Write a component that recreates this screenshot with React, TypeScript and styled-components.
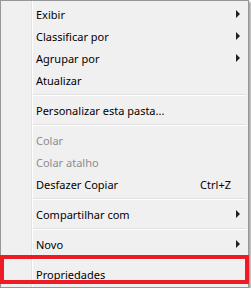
import React from 'react'
import styled, { createGlobalStyle } from 'styled-components'

const GlobalStyle = createGlobalStyle`
  html, body {
    margin: 0;
    padding: 0;
    background: #ffffff;
  }
`

const Menu = styled.div`
  position: relative;
  width: 249px;
  box-sizing: border-box;
  border: 1px solid #979797;
  background-color: #f0f0f0;
  background-image: linear-gradient(
    to right,
    transparent 30px,
    #e2e3e3 30px,
    #e2e3e3 31px,
    #ffffff 31px,
    #ffffff 32px,
    transparent 32px
  );
  padding: 2px;
  box-shadow: 2px 2px 2px rgba(0, 0, 0, 0.35);
  font-family: 'Noto Sans', 'Open Sans', sans-serif;
  font-size: 11px;
  display: flex;
  flex-direction: column;
`

const Item = styled.div<{ $disabled?: boolean }>`
  display: grid;
  grid-template-columns: 1fr auto 10px;
  align-items: center;
  height: 22px;
  padding-left: 33px;
  color: ${(p) => (p.$disabled ? '#8d8d8d' : '#000000')};
  white-space: nowrap;
`

const Label = styled.span``

const Shortcut = styled.span`
  padding-right: 5px;
`

const Arrow = styled.span`
  justify-self: start;
  width: 0;
  height: 0;
  border-top: 4px solid transparent;
  border-bottom: 4px solid transparent;
  border-left: 4px solid #202020;
`

const Separator = styled.div`
  height: 8px;
  margin-left: 30px;
  display: flex;
  flex-direction: column;
  justify-content: center;
  &::before {
    content: '';
    display: block;
    border-top: 1px solid #e0e0e0;
    border-bottom: 1px solid #ffffff;
  }
`

const Highlight = styled.div`
  position: absolute;
  left: -1px;
  right: -1px;
  bottom: 3px;
  height: 29px;
  box-sizing: border-box;
  border: 4px solid #ed1c24;
  pointer-events: none;
`

type Entry =
  | { sep: true }
  | { label: string; submenu?: boolean; shortcut?: string; disabled?: boolean }

const entries: Entry[] = [
  { label: 'Exibir', submenu: true },
  { label: 'Classificar por', submenu: true },
  { label: 'Agrupar por', submenu: true },
  { label: 'Atualizar' },
  { sep: true },
  { label: 'Personalizar esta pasta...' },
  { sep: true },
  { label: 'Colar', disabled: true },
  { label: 'Colar atalho', disabled: true },
  { label: 'Desfazer Copiar', shortcut: 'Ctrl+Z' },
  { sep: true },
  { label: 'Compartilhar com', submenu: true },
  { sep: true },
  { label: 'Novo', submenu: true },
  { sep: true },
  { label: 'Propriedades' },
]

export default function App() {
  return (
    <>
      <GlobalStyle />
      <Menu>
        {entries.map((e, i) =>
          'sep' in e ? (
            <Separator key={i} />
          ) : (
            <Item key={i} $disabled={e.disabled}>
              <Label>{e.label}</Label>
              <Shortcut>{e.shortcut}</Shortcut>
              {e.submenu ? <Arrow /> : <span />}
            </Item>
          )
        )}
        <Highlight />
      </Menu>
    </>
  )
}
